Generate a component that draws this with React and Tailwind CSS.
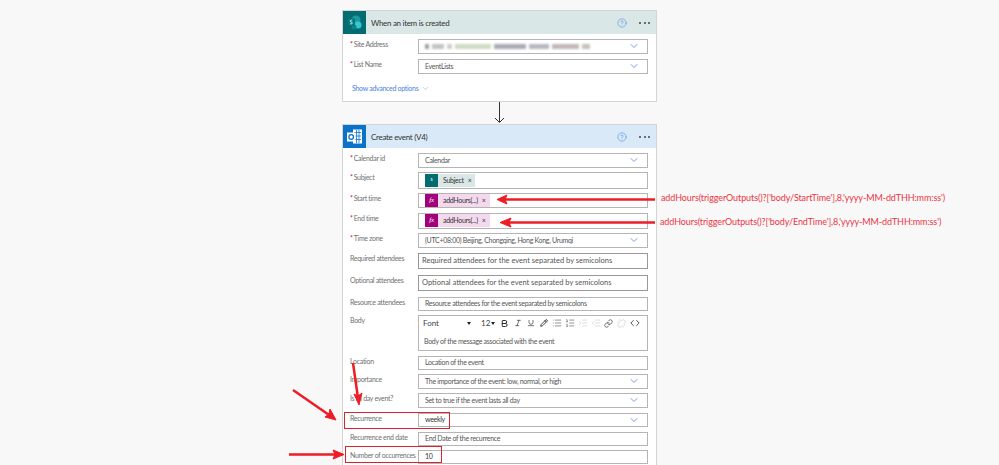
import React from "react";
import {
  Bold,
  ChevronDown,
  CircleHelp,
  Code,
  Indent,
  Italic,
  Link,
  List,
  ListOrdered,
  Outdent,
  Pencil,
  Underline,
  Unlink,
} from "lucide-react";

const font = { fontFamily: 'Lato, "Noto Sans", sans-serif' };

function SharePointIcon() {
  return (
    <svg width="23" height="23" viewBox="0 0 23 23" className="shrink-0">
      <rect width="23" height="23" fill="#036c70" />
      <circle cx="13" cy="9" r="4.5" fill="#1a9ba1" />
      <circle cx="15" cy="14" r="3.5" fill="#37c6d0" />
      <circle cx="11" cy="16" r="2.5" fill="#04868b" />
      <rect x="5" y="7.5" width="7" height="7" fill="#03787c" />
      <path d="M7 12.6c.8.4 2.4.4 2.4-.6 0-1.100-2.300-.8-2.300-2 0-.9 1.400-1 2.200-.6" fill="none" stroke="#fff" strokeWidth="0.8" />
    </svg>
  );
}

function OutlookIcon() {
  return (
    <svg width="23" height="23" viewBox="0 0 23 23" className="shrink-0">
      <rect width="23" height="23" fill="#0a72c8" />
      <rect x="10" y="4.500" width="9" height="14" fill="#fff" />
      <path d="M11 7.500h7M11 11h7M11 14.500h7M13.500 5v13M16 5v13" stroke="#0a72c8" strokeWidth="0.8" />
      <rect x="4" y="7.500" width="8.500" height="9" fill="#fff" />
      <circle cx="8.200" cy="12" r="2.300" fill="none" stroke="#0a72c8" strokeWidth="1.300" />
    </svg>
  );
}

function FxIcon() {
  return (
    <span className="w-[13px] h-[13px] bg-[#a3007c] text-white flex items-center justify-center italic text-[7px] shrink-0" style={{ fontFamily: '"Liberation Serif", serif' }}>
      fx
    </span>
  );
}

function CardHeader({ icon, title, bg }) {
  return (
    <div className={`h-[23px] flex items-center ${bg}`}>
      {icon}
      <span className="ml-[5px] text-[8px] tracking-[-0.3px] text-[#333] flex-1">{title}</span>
      <CircleHelp size={10} className="text-[#5b8fe8] mr-[12px]" strokeWidth={1.500} />
      <span className="flex gap-[2.500px] mr-[6px]">
        <i className="w-[2px] h-[2px] bg-[#444] rounded-full" />
        <i className="w-[2px] h-[2px] bg-[#444] rounded-full" />
        <i className="w-[2px] h-[2px] bg-[#444] rounded-full" />
      </span>
    </div>
  );
}

function Row({ label, required, children, top, height = "h-[15px]" }) {
  return (
    <div className={`flex ${top} ${height}`}>
      <div className="w-[68px] ml-[7px] text-[7px] tracking-[-0.3px] leading-[11px] text-[#707070] whitespace-nowrap overflow-visible">
        {required && <span className="text-[#c8102e] mr-[1px]">*</span>}
        {label}
      </div>
      {children}
    </div>
  );
}

function Input({ children, chevron, big, tall }) {
  return (
    <div
      className={`w-[230px] flex items-center bg-white border pb-[1px] ${tall ? "border-[1.500px] border-[#999]" : "border-[#b5b5b5]"} ${big ? "pl-[3px] text-[7.500px]" : "pl-[6px] text-[7px] tracking-[-0.3px]"} text-[#555] whitespace-nowrap`}
    >
      <span className="flex-1 flex items-center">{children}</span>
      {chevron && <ChevronDown size={12} className="text-[#4a7fe0] mr-[7px]" strokeWidth={1.500} />}
    </div>
  );
}

function Token({ icon, bg, text }) {
  return (
    <span className={`flex items-center h-[13px] pr-[4px] ${bg} text-[7px] text-[#333]`}>
      {icon}
      <span className="ml-[5px]">{text}</span>
      <span className="ml-[4px] text-[7px]">×</span>
    </span>
  );
}

function Toolbar() {
  const icons = [
    [Bold, "text-[#222]", 9, 2.500],
    [Italic, "text-[#333]", 8, 2],
    [Underline, "text-[#333]", 8, 2],
    [Pencil, "text-[#222]", 8, 2.500],
    [List, "text-[#555]", 10, 1.500],
    [ListOrdered, "text-[#555]", 10, 1.500],
    [Indent, "text-[#ccc]", 10, 1.500],
    [Outdent, "text-[#ccc]", 10, 1.500],
    [Link, "text-[#444]", 9, 2],
    [Unlink, "text-[#ccc]", 9, 2],
    [Code, "text-[#333]", 10, 2],
  ];
  return (
    <div className="h-[14px] flex items-center pl-[4px] text-[8px] text-[#444]">
      <span className="w-[44px]">Font</span>
      <span className="w-0 h-0 border-x-[2.500px] border-x-transparent border-t-[3px] border-t-[#222] mr-[10px]" />
      <span className="w-[8px]">12</span>
      <span className="w-0 h-0 border-x-[2.500px] border-x-transparent border-t-[3px] border-t-[#222] ml-[2px] mr-[3px]" />
      {icons.map(([Icon, color, size, stroke], i) => (
        <span key={i} className="w-[13px] flex justify-center">
          <Icon size={size} className={color} strokeWidth={stroke} />
        </span>
      ))}
    </div>
  );
}

function Annotations() {
  return (
    <>
      <svg width="999" height="465" className="absolute inset-0 pointer-events-none">
        <g stroke="#ee1c25" strokeWidth="2.500" fill="#ee1c25">
          <line x1="655" y1="199.500" x2="503" y2="199.500" />
          <polygon points="497,199.500 507,195 505,199.500 507,204" strokeWidth="1" />
          <line x1="655" y1="222.500" x2="507" y2="222.500" />
          <polygon points="500,222.500 511,218 509,222.500 511,227" strokeWidth="1" />
          <line x1="293" y1="390" x2="332" y2="417" />
          <polygon points="336,420 325,417 329,414 330,409" strokeWidth="1" />
          <line x1="289" y1="454.500" x2="338" y2="454.500" />
          <polygon points="344,454.500 333,450 335,454.500 333,459" strokeWidth="1" />
          <line x1="353" y1="363" x2="358" y2="398" />
          <polygon points="359,405 354,394 358,396 362,393" strokeWidth="1" />
        </g>
      </svg>
      <div className="absolute left-[344px] top-[412px] w-[106px] h-[17px] border-[1.500px] border-[#d9232e]" />
      <div className="absolute left-[345px] top-[446px] w-[97px] h-[17px] border-[1.500px] border-[#d9232e]" />
      <div className="absolute left-[661px] top-[191px] text-[9px] tracking-[-0.1px] leading-[14px] text-[#ee3344] whitespace-nowrap">
        addHours(triggerOutputs()?['body/StartTime'],8,'yyyy-MM-ddTHH:mm:ss')
      </div>
      <div className="absolute left-[660px] top-[215px] text-[9px] tracking-[-0.1px] leading-[14px] text-[#ee3344] whitespace-nowrap">
        addHours(triggerOutputs()?['body/EndTime'],8,'yyyy-MM-ddTHH:mm:ss')
      </div>
    </>
  );
}

export default function App() {
  return (
    <div className="relative w-[999px] h-[465px] overflow-hidden bg-[#f8f8f8]" style={font}>
      <div className="w-[313px] mx-auto pt-[10px]">
        <div className="h-[92px] bg-white border border-[#d4d4d4] -mx-px">
          <CardHeader icon={<SharePointIcon />} title="When an item is created" bg="bg-[#d9e8e6]" />
          <Row label="Site Address" required top="mt-[5px]">
            <Input chevron>
              <span className="flex gap-[3px] blur-[1px] opacity-70">
                <i className="w-[4px] h-[5px] bg-[#777]" />
                <i className="w-[12px] h-[5px] bg-[#aaa]" />
                <i className="w-[5px] h-[5px] bg-[#bbb]" />
                <i className="w-[36px] h-[5px] bg-[#bca]" />
                <i className="w-[32px] h-[5px] bg-[#889]" />
                <i className="w-[20px] h-[5px] bg-[#99a]" />
                <i className="w-[27px] h-[5px] bg-[#a99]" />
                <i className="w-[8px] h-[5px] bg-[#aa9]" />
              </span>
            </Input>
          </Row>
          <Row label="List Name" required top="mt-[5px]">
            <Input chevron>EventLists</Input>
          </Row>
          <div className="mt-[9px] ml-[9px] flex items-center text-[7px] tracking-[-0.3px] text-[#4a7fe0]">
            Show advanced options
            <ChevronDown size={9} className="ml-[3px] text-[#8aa8e0]" strokeWidth={1.500} />
          </div>
        </div>

        <div className="h-[22px] flex justify-center">
          <svg width="11" height="22" viewBox="0 0 11 22">
            <path d="M5.500 0v20M1 16l4.500 4.500L10 16" fill="none" stroke="#333" strokeWidth="1" />
          </svg>
        </div>

        <div className="h-[400px] bg-white border border-[#d4d4d4] -mx-px">
          <CardHeader icon={<OutlookIcon />} title="Create event (V4)" bg="bg-[#d9e9f7]" />
          <Row label="Calendar id" required top="mt-[5px]">
            <Input chevron>Calendar</Input>
          </Row>
          <Row label="Subject" required top="mt-[4px]" height="h-[17px]">
            <Input>
              <Token
                bg="bg-[#d9e8e6]"
                text="Subject"
                icon={<span className="w-[13px] h-[13px] bg-[#036c70] flex items-center justify-center text-[5px] text-white">s</span>}
              />
            </Input>
          </Row>
          <Row label="Start time" required top="mt-[4px]">
            <Input>
              <Token bg="bg-[#f4d9ee]" text="addHours(...)" icon={<FxIcon />} />
            </Input>
          </Row>
          <Row label="End time" required top="mt-[5px]" height="h-[16px]">
            <Input>
              <Token bg="bg-[#f4d9ee]" text="addHours(...)" icon={<FxIcon />} />
            </Input>
          </Row>
          <Row label="Time zone" required top="mt-[4px]">
            <Input chevron>(UTC+08:00) Beijing, Chongqing, Hong Kong, Urumqi</Input>
          </Row>
          <Row label="Required attendees" top="mt-[5px]" height="h-[16px]">
            <Input big tall>Required attendees for the event separated by semicolons</Input>
          </Row>
          <Row label="Optional attendees" top="mt-[6px]" height="h-[16px]">
            <Input big tall>Optional attendees for the event separated by semicolons</Input>
          </Row>
          <Row label="Resource attendees" top="mt-[6px]" height="h-[14px]">
            <Input>Resource attendees for the event separated by semicolons</Input>
          </Row>
          <Row label="Body" top="mt-[4px]" height="h-[36px]">
            <div className="w-[230px] bg-white border border-[#b5b5b5]">
              <Toolbar />
              <div className="pl-[5px] pt-[6px] text-[7px] tracking-[-0.3px] text-[#555]">Body of the message associated with the event</div>
            </div>
          </Row>
          <Row label="Location" top="mt-[5px]" height="h-[14px]">
            <Input>Location of the event</Input>
          </Row>
          <Row label="Importance" top="mt-[4px]">
            <Input chevron>The importance of the event: low, normal, or high</Input>
          </Row>
          <Row label="Is all day event?" top="mt-[4px]">
            <Input chevron>Set to true if the event lasts all day</Input>
          </Row>
          <Row label="Recurrence" top="mt-[5px]" height="h-[14px]">
            <Input chevron>
              <span className="text-[#333]">weekly</span>
            </Input>
          </Row>
          <Row label="Recurrence end date" top="mt-[5px]" height="h-[14px]">
            <Input>End Date of the recurrence</Input>
          </Row>
          <Row label="Number of occurrences" top="mt-[4px]" height="h-[14px]">
            <Input>
              <span className="text-[#333]">10</span>
            </Input>
          </Row>
        </div>
      </div>
      <Annotations />
    </div>
  );
}
